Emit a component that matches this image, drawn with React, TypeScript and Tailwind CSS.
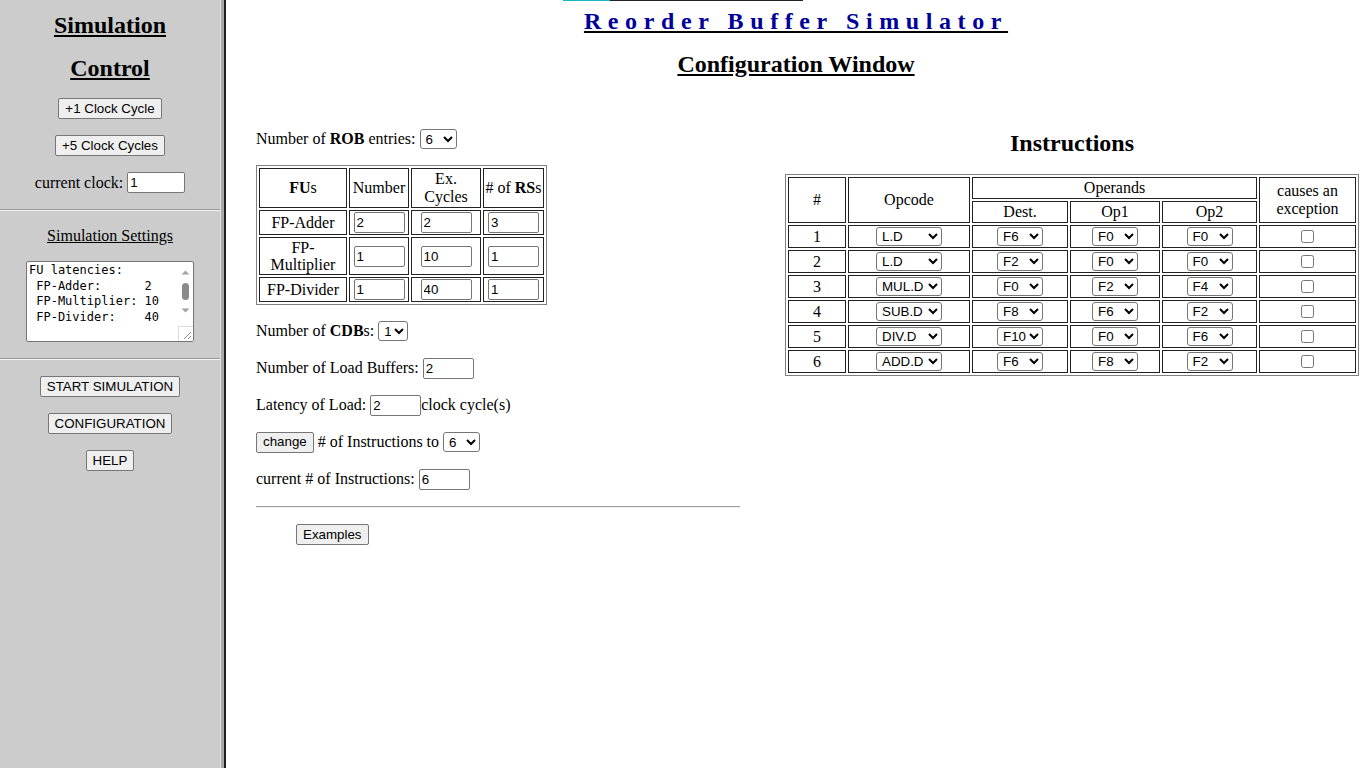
import React from 'react';

const ctl = "font-['Liberation_Sans',Arial,sans-serif] text-[13.333px] text-black";
const btn = `${ctl} h-[21px] px-[6px] bg-[#efefef] border border-[#767676] rounded-[2px] leading-none`;
const field = `${ctl} h-[21px] px-[2px] bg-white border border-[#767676] rounded-[2px] outline-none`;
const sel = `${ctl} bg-white border border-[#767676] rounded-[3px] pl-[1px]`;

const opcodes = ['L.D', 'S.D', 'ADD.D', 'SUB.D', 'MUL.D', 'DIV.D'];
const regs = ['F0', 'F2', 'F4', 'F6', 'F8', 'F10', 'F12', 'F14'];

const instructions = [
  ['L.D', 'F6', 'F0', 'F0'],
  ['L.D', 'F2', 'F0', 'F0'],
  ['MUL.D', 'F0', 'F2', 'F4'],
  ['SUB.D', 'F8', 'F6', 'F2'],
  ['DIV.D', 'F10', 'F0', 'F6'],
  ['ADD.D', 'F6', 'F8', 'F2'],
];

const fus = [
  { name: <>FP-Adder</>, n: '2', ex: '2', rs: '3' },
  { name: <>FP-<br />Multiplier</>, n: '1', ex: '10', rs: '1' },
  { name: <>FP-Divider</>, n: '1', ex: '40', rs: '1' },
];

const latencies = `FU latencies:
 FP-Adder:      2
 FP-Multiplier: 10
 FP-Divider:    40

ROB entries:    6
CDBs:           1
Load Buffers:   2
Load latency:   2`;

function Select({ value, options, className }: { value: string; options: string[]; className: string }) {
  return (
    <select defaultValue={value} className={`${sel} ${className}`}>
      {options.map((o) => (
        <option key={o} value={o}>
          {o}
        </option>
      ))}
    </select>
  );
}

// textarea with a drawn scrollbar + resize grip (headless hides native ones)
function SettingsBox() {
  return (
    <div className="relative mt-[16px] w-[168px] h-[81px]">
      <textarea
        readOnly
        defaultValue={latencies}
        className="block w-full h-full resize-none bg-white border border-[#767676] rounded-[2px] pl-[2px] pr-[16px] pt-[1px] font-['DejaVu_Sans_Mono',monospace] text-[12px] leading-[15.5px] overflow-hidden whitespace-pre outline-none"
      />
      <div className="absolute right-[1px] top-[1px] w-[15px] h-[64px] flex flex-col items-center">
        <svg width="15" height="15" viewBox="0 0 15 15" className="mt-[3px]">
          <path d="M3.5 9.5 L7.5 5.5 L11.5 9.5 Z" fill="#a3a3a3" />
        </svg>
        <div className="mt-[3px] w-[7px] h-[17px] rounded-full bg-[#8a8a8a]" />
        <svg width="15" height="15" viewBox="0 0 15 15" className="mt-[3px]">
          <path d="M3.5 5.5 L7.5 9.5 L11.5 5.5 Z" fill="#a3a3a3" />
        </svg>
      </div>
      <div className="absolute right-[1px] bottom-[1px] w-[15px] h-[15px] bg-white border-l border-t border-[#dcdcdc]">
        <svg width="14" height="14" viewBox="0 0 14 14">
          <path d="M12 5 L5 12 M12 9 L9 12" stroke="#8c8c8c" strokeWidth="1" />
        </svg>
      </div>
    </div>
  );
}

function Sidebar() {
  return (
    <div className="w-[220px] shrink-0 bg-[#cccccc] flex flex-col items-center pt-[4px]">
      <h2 className="text-[24px] font-bold leading-[43px] underline text-center">Simulation</h2>
      <h2 className="text-[24px] font-bold leading-[43px] underline text-center">Control</h2>
      <button className={`${btn} mt-[8px]`}>+1 Clock Cycle</button>
      <button className={`${btn} mt-[16px]`}>+5 Clock Cycles</button>
      <div className="mt-[16px] flex items-center gap-[4px] h-[21px]">
        <span>current clock:</span>
        <input className={`${field} w-[58px]`} defaultValue="1" />
      </div>
      <div className="mt-[16px] w-full border-t border-t-[#9a9a9a] border-b border-b-[#f4f4f4]" />
      <div className="mt-[16px] leading-[18px] underline">Simulation Settings</div>
      <SettingsBox />
      <div className="mt-[16px] w-full border-t border-t-[#9a9a9a] border-b border-b-[#f4f4f4]" />
      <button className={`${btn} mt-[16px]`}>START SIMULATION</button>
      <button className={`${btn} mt-[16px]`}>CONFIGURATION</button>
      <button className={`${btn} mt-[16px]`}>HELP</button>
    </div>
  );
}

function FuTable() {
  const cell = 'border border-[#222] p-[1px] text-center font-normal';
  return (
    <table className="mt-[16px] border-separate border-spacing-[2px] border border-[#808080] leading-[18px]">
      <thead>
        <tr className="h-[40px]">
          <th className={`${cell} w-[88px]`}>
            <b>FU</b>s
          </th>
          <th className={`${cell} w-[60px]`}>Number</th>
          <th className={`${cell} w-[70px]`}>
            Ex.
            <br />
            Cycles
          </th>
          <th className={`${cell} w-[61px]`}>
            # of <b>RS</b>s
          </th>
        </tr>
      </thead>
      <tbody>
        {fus.map((f, i) => (
          <tr key={i}>
            <td className={`${cell} leading-[17px]`}>{f.name}</td>
            <td className={cell}>
              <input className={`${field} w-[51px] block mx-auto`} defaultValue={f.n} />
            </td>
            <td className={cell}>
              <input className={`${field} w-[51px] block mx-auto`} defaultValue={f.ex} />
            </td>
            <td className={cell}>
              <input className={`${field} w-[51px] block mx-auto`} defaultValue={f.rs} />
            </td>
          </tr>
        ))}
      </tbody>
    </table>
  );
}

function InstructionTable() {
  const cell = 'border border-[#222] p-[1px] text-center font-normal';
  return (
    <table className="mt-[17px] w-[574px] border-separate border-spacing-[2px] border border-[#808080] leading-[18px]">
      <thead>
        <tr className="h-[22px]">
          <th rowSpan={2} className={`${cell} w-[58px]`}>
            #
          </th>
          <th rowSpan={2} className={`${cell} w-[122px]`}>
            Opcode
          </th>
          <th colSpan={3} className={cell}>
            Operands
          </th>
          <th rowSpan={2} className={`${cell} w-[97px] px-[8px]`}>
            causes an exception
          </th>
        </tr>
        <tr className="h-[22px]">
          <th className={`${cell} w-[96px]`}>Dest.</th>
          <th className={`${cell} w-[90px]`}>Op1</th>
          <th className={`${cell} w-[95px]`}>Op2</th>
        </tr>
      </thead>
      <tbody>
        {instructions.map((r, i) => (
          <tr key={i} className="h-[23px]">
            <td className={cell}>{i + 1}</td>
            <td className={cell}>
              <Select value={r[0]} options={opcodes} className="w-[66px] h-[19px] block mx-auto" />
            </td>
            <td className={cell}>
              <Select value={r[1]} options={regs} className="w-[46px] h-[19px] block mx-auto" />
            </td>
            <td className={cell}>
              <Select value={r[2]} options={regs} className="w-[46px] h-[19px] block mx-auto" />
            </td>
            <td className={cell}>
              <Select value={r[3]} options={regs} className="w-[46px] h-[19px] block mx-auto" />
            </td>
            <td className={cell}>
              <input type="checkbox" className="w-[13px] h-[13px] block mx-auto" />
            </td>
          </tr>
        ))}
      </tbody>
    </table>
  );
}

export default function App() {
  const nums = ['1', '2', '3', '4', '5', '6', '7', '8', '9', '10'];
  return (
    <div className="flex h-screen overflow-hidden bg-white font-['Liberation_Serif',serif] text-[16px] text-black">
      <Sidebar />
      <div className="w-[6px] shrink-0 border-l border-l-[#dedede] bg-[#a9a9a9] border-r-2 border-r-[#1f1f1f]" />

      <main className="flex-1 min-w-0">
        <div className="flex h-[1px] ml-[337px]">
          <div className="w-[47px] bg-[#17b6c7]" />
          <div className="w-[193px] bg-[#222]" />
        </div>
        <h1 className="text-center leading-[40px] text-[24px] font-bold tracking-[6.6px] underline decoration-black text-[#000099]">
          Reorder Buffer Simulator
        </h1>
        <h2 className="text-center leading-[46px] text-[24px] font-bold underline">Configuration Window</h2>

        <div className="flex pl-[30px] mt-[42px]">
          <section className="w-[484px] flex flex-col items-start">
            <div className="flex items-center gap-[4px] h-[20px]">
              <span>
                Number of <b>ROB</b> entries:
              </span>
              <Select value="6" options={nums} className="w-[37px] h-[20px]" />
            </div>

            <FuTable />

            <div className="mt-[16px] flex items-center gap-[4px] h-[20px]">
              <span>
                Number of <b>CDB</b>s:
              </span>
              <Select value="1" options={['1', '2', '3']} className="w-[30px] h-[20px]" />
            </div>
            <div className="mt-[17px] flex items-center gap-[4px] h-[20px]">
              <span>Number of Load Buffers:</span>
              <input className={`${field} w-[51px]`} defaultValue="2" />
            </div>
            <div className="mt-[17px] flex items-center h-[20px]">
              <span className="mr-[4px]">Latency of Load:</span>
              <input className={`${field} w-[51px]`} defaultValue="2" />
              <span>clock cycle(s)</span>
            </div>
            <div className="mt-[17px] flex items-center gap-[4px] h-[20px]">
              <button className={btn}>change</button>
              <span># of Instructions to</span>
              <Select value="6" options={nums} className="w-[37px] h-[20px]" />
            </div>
            <div className="mt-[17px] flex items-center gap-[4px] h-[20px]">
              <span>current # of Instructions:</span>
              <input className={`${field} w-[51px]`} defaultValue="6" />
            </div>
            <div className="mt-[17px] w-full border-t border-t-[#a0a0a0] border-b border-b-[#eeeeee]" />
            <button className={`${btn} mt-[16px] ml-[40px]`}>Examples</button>
          </section>

          <section className="ml-[45px] w-[574px] shrink-0">
            <h2 className="text-center text-[24px] font-bold leading-[28px]">Instructions</h2>
            <InstructionTable />
          </section>
        </div>
      </main>
    </div>
  );
}
